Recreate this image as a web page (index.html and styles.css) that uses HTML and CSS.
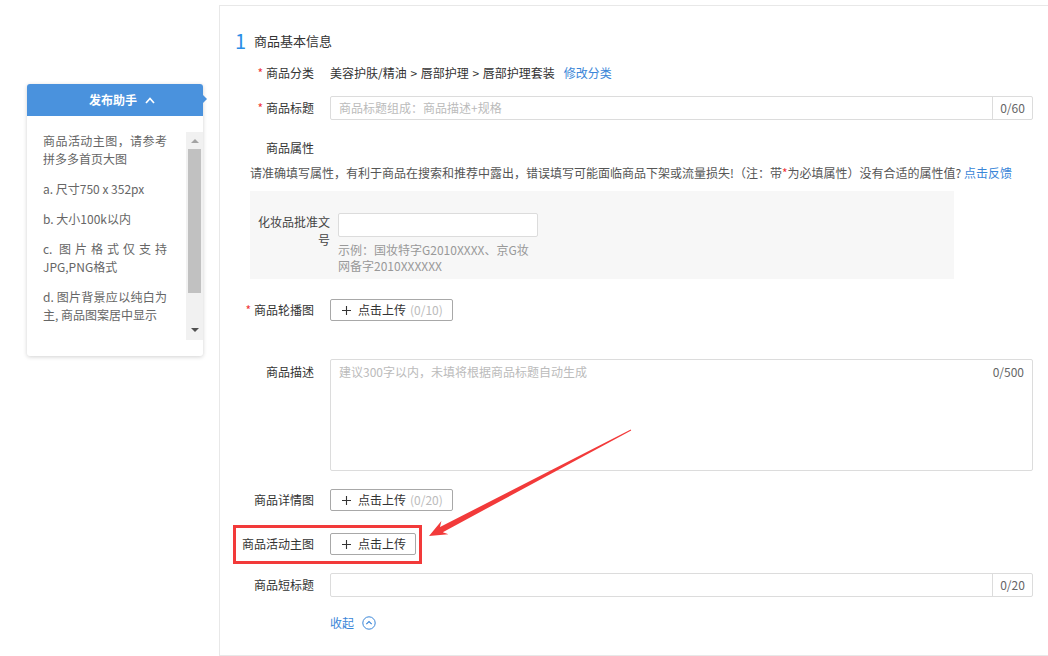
FILE: index.html
```html
<!DOCTYPE html>
<html lang="zh-CN">
<head>
<meta charset="utf-8">
<title>商品基本信息</title>
<link rel="stylesheet" href="styles.css">
</head>
<body>
<div class="page">
  <aside class="helper">
    <div class="helper-head">
      <span class="helper-title">发布助手</span>
      <svg class="helper-chev" width="10" height="7" viewBox="0 0 10 7"><polyline points="1,6 5,1.5 9,6" fill="none" stroke="#fff" stroke-width="1.7"/></svg>
    </div>
    <div class="helper-body">
      <div class="helper-text">
        <p>商品活动主图，请参考拼多多首页大图</p>
        <p>a. 尺寸750 x 352px</p>
        <p>b. 大小100k以内</p>
        <p>c. 图片格式仅支持JPG,PNG格式</p>
        <p>d. 图片背景应以纯白为主, 商品图案居中显示</p>
      </div>
      <div class="scrollbar">
        <span class="sb-up"></span>
        <span class="sb-thumb"></span>
        <span class="sb-gap"></span>
        <span class="sb-down"></span>
      </div>
    </div>
  </aside>

  <section class="card">
    <div class="sec-title">
      <span class="sec-num">1</span>
      <span class="sec-name">商品基本信息</span>
    </div>

    <div class="row row--cat">
      <div class="label"><span class="req">*</span>商品分类</div>
      <div class="value">美容护肤/精油 <span class="sep">&gt;</span> 唇部护理 <span class="sep">&gt;</span> 唇部护理套装<a class="link link--cat">修改分类</a></div>
    </div>

    <div class="row row--title">
      <div class="label"><span class="req">*</span>商品标题</div>
      <div class="text-input">
        <span class="placeholder">商品标题组成：商品描述+规格</span>
        <span class="counter">0/60</span>
      </div>
    </div>

    <div class="row row--attr">
      <div class="label">商品属性</div>
    </div>

    <div class="notice">请准确填写属性，有利于商品在搜索和推荐中露出，错误填写可能面临商品下架或流量损失!（注：带<span class="req-inline">*</span>为必填属性）没有合适的属性值?&nbsp;<a class="link">点击反馈</a></div>

    <div class="attr-box">
      <div class="attr-label">化妆品批准文号</div>
      <div class="attr-field">
        <div class="attr-input"></div>
        <div class="attr-example"><span>示例：国妆特字G2010XXXX、京G妆</span><span>网备字2010XXXXXX</span></div>
      </div>
    </div>

    <div class="row row--carousel">
      <div class="label"><span class="req">*</span>商品轮播图</div>
      <button class="upload-btn" type="button">
        <svg class="plus" width="9" height="9" viewBox="0 0 9 9"><path d="M4.5 0V9M0 4.5H9" stroke="#333" stroke-width="1.1"/></svg>
        <span>点击上传</span><span class="upload-count">(0/10)</span>
      </button>
    </div>

    <div class="row row--desc">
      <div class="label label--top">商品描述</div>
      <div class="textarea">
        <span class="placeholder">建议300字以内，未填将根据商品标题自动生成</span>
        <span class="ta-counter">0/500</span>
      </div>
    </div>

    <div class="row row--detail">
      <div class="label">商品详情图</div>
      <button class="upload-btn" type="button">
        <svg class="plus" width="9" height="9" viewBox="0 0 9 9"><path d="M4.5 0V9M0 4.5H9" stroke="#333" stroke-width="1.1"/></svg>
        <span>点击上传</span><span class="upload-count">(0/20)</span>
      </button>
    </div>

    <div class="row row--activity">
      <div class="label">商品活动主图</div>
      <button class="upload-btn" type="button">
        <svg class="plus" width="9" height="9" viewBox="0 0 9 9"><path d="M4.5 0V9M0 4.5H9" stroke="#333" stroke-width="1.1"/></svg>
        <span>点击上传</span>
      </button>
    </div>

    <div class="row row--short">
      <div class="label">商品短标题</div>
      <div class="text-input">
        <span class="placeholder"></span>
        <span class="counter">0/20</span>
      </div>
    </div>

    <div class="row row--collapse">
      <a class="link collapse">收起
        <svg width="14" height="14" viewBox="0 0 14 14"><circle cx="7" cy="7" r="6.2" fill="none" stroke="#3a86d8" stroke-width="1"/><polyline points="4.3,8.2 7,5.5 9.7,8.2" fill="none" stroke="#3a86d8" stroke-width="1.1"/></svg>
      </a>
    </div>
  </section>
</div>

<svg class="annotation" width="1048" height="656" viewBox="0 0 1048 656">
  <rect x="234.5" y="526.5" width="186" height="36" fill="none" stroke="#f23a3a" stroke-width="3"/>
  <polygon fill="#f23a3a" points="429,536 441.4,521 440,527 630.8,429.6 631.2,430.4 442.8,532.2 448.4,534.3"/>
</svg>
</body>
</html>
```

FILE: styles.css
```css
* { box-sizing: border-box; }

html, body {
  margin: 0;
  padding: 0;
  background: #fff;
  overflow: hidden;
}

body {
  width: 1048px;
  height: 656px;
  position: relative;
  font-family: "Noto Sans CJK SC", "Noto Sans", sans-serif;
  font-size: 12px;
  color: #333;
}

.page {
  display: flex;
  align-items: flex-start;
}

/* ---------- helper panel ---------- */
.helper {
  width: 176px;
  margin: 84px 0 0 27px;
  flex-shrink: 0;
  background: #fff;
  border-radius: 3px;
  box-shadow: 0 1px 4px rgba(0, 0, 0, 0.18);
}

.helper-head {
  position: relative;
  height: 32px;
  background: #4a92dd;
  border-radius: 3px 3px 0 0;
  display: flex;
  align-items: center;
  justify-content: center;
  padding-left: 14px;
  gap: 8px;
  color: #fff;
}

.helper-head::after {
  content: "";
  position: absolute;
  right: -4px;
  top: 11px;
  border-left: 4px solid #4a92dd;
  border-top: 4px solid transparent;
  border-bottom: 4px solid transparent;
}

.helper-title {
  font-size: 12px;
  font-weight: bold;
  line-height: 18px;
}

.helper-chev { display: block; }

.helper-body {
  display: flex;
  padding: 16px 0 16px 16px;
}

.helper-text {
  flex: 1;
  height: 208px;
  overflow: hidden;
  padding-right: 19px;
  color: #666;
  line-height: 18px;
  text-align: justify;
}

.helper-text p {
  margin: 0 0 12px 0;
}

.scrollbar {
  width: 17px;
  height: 208px;
  background: #f1f1f1;
  display: flex;
  flex-direction: column;
  align-items: center;
}

.sb-up, .sb-down {
  width: 0;
  height: 0;
  border-left: 4px solid transparent;
  border-right: 4px solid transparent;
}

.sb-up {
  margin-top: 7px;
  border-bottom: 4px solid #a3a3a3;
}

.sb-down {
  margin-bottom: 8px;
  border-top: 4px solid #505050;
}

.sb-thumb {
  margin-top: 6px;
  width: 13px;
  height: 144px;
  background: #c1c1c1;
}

.sb-gap { flex: 1; }

/* ---------- main card ---------- */
.card {
  flex-shrink: 0;
  width: 850px;
  height: 651px;
  margin: 5px 0 0 16px;
  border: 1px solid #e8e8e8;
  background: #fff;
}

.sec-title {
  margin-top: 23px;
  height: 24px;
  display: flex;
  align-items: center;
  padding-left: 15px;
}

.sec-num {
  width: 19px;
  font-size: 20px;
  line-height: 24px;
  color: #2a8ee6;
}

.sec-name {
  font-size: 13px;
  line-height: 20px;
  color: #333;
}

.row {
  display: flex;
  align-items: center;
}

.row--cat { margin-top: 8px; height: 24px; }
.row--title { margin-top: 11px; height: 24px; }
.row--attr { margin-top: 18px; height: 20px; }
.row--carousel { margin-top: 20px; height: 22px; }
.row--desc { margin-top: 38px; height: 112px; align-items: flex-start; }
.row--detail { margin-top: 18px; height: 22px; }
.row--activity { margin-top: 22px; height: 22px; }
.row--short { margin-top: 18px; height: 24px; }
.row--collapse { margin-top: 16px; height: 20px; padding-left: 110px; }

.label {
  width: 94px;
  margin-right: 16px;
  flex-shrink: 0;
  text-align: right;
  line-height: 18px;
  color: #333;
}

.label--top { margin-top: 4px; }

.req {
  color: #f0353a;
  margin-right: 3px;
}

.req-inline { color: #f0353a; }

.value {
  line-height: 18px;
  color: #333;
}

.sep { margin: 0 1px; }

.link {
  color: #3a86d8;
  text-decoration: none;
}

.link--cat { margin-left: 9px; }

.text-input {
  width: 703px;
  height: 24px;
  border: 1px solid #dcdcdc;
  border-radius: 2px;
  display: flex;
}

.placeholder {
  flex: 1;
  padding-left: 8px;
  line-height: 22px;
  color: #bbb;
}

.counter {
  width: 40px;
  border-left: 1px solid #dcdcdc;
  text-align: center;
  line-height: 22px;
  color: #666;
}

.notice {
  margin: 6px 0 0 30px;
  height: 18px;
  line-height: 18px;
  white-space: nowrap;
  color: #555;
}

.attr-box {
  margin: 9px 0 0 30px;
  width: 704px;
  height: 88px;
  padding-top: 22px;
  background: #f7f7f7;
  display: flex;
  align-items: flex-start;
}

.attr-label {
  width: 72px;
  margin: 0 8px;
  text-align: right;
  line-height: 18px;
  color: #444;
}

.attr-input {
  width: 200px;
  height: 24px;
  background: #fff;
  border: 1px solid #dcdcdc;
  border-radius: 2px;
}

.attr-example {
  margin-top: 5px;
  line-height: 16px;
  color: #999;
}

.attr-example span { display: block; white-space: nowrap; }

.upload-btn {
  height: 22px;
  padding: 0 9px 0 11px;
  border: 1px solid #a8a8a8;
  border-radius: 2px;
  background: #fff;
  display: inline-flex;
  align-items: center;
  font-family: inherit;
  font-size: 12px;
  color: #333;
  line-height: 18px;
}

.plus { margin-right: 7px; display: block; }

.upload-count {
  margin-left: 4px;
  color: #bbb;
}

.textarea {
  width: 703px;
  height: 112px;
  border: 1px solid #dcdcdc;
  border-radius: 2px;
  padding: 3px 8px 0 0;
  display: flex;
  align-items: flex-start;
  line-height: 18px;
}

.textarea .placeholder { line-height: 18px; }

.ta-counter { color: #666; }

.collapse {
  display: flex;
  align-items: center;
  gap: 8px;
  line-height: 18px;
}

.collapse svg { display: block; }

/* ---------- annotation overlay ---------- */
.annotation {
  position: absolute;
  left: 0;
  top: 0;
  pointer-events: none;
}
```
